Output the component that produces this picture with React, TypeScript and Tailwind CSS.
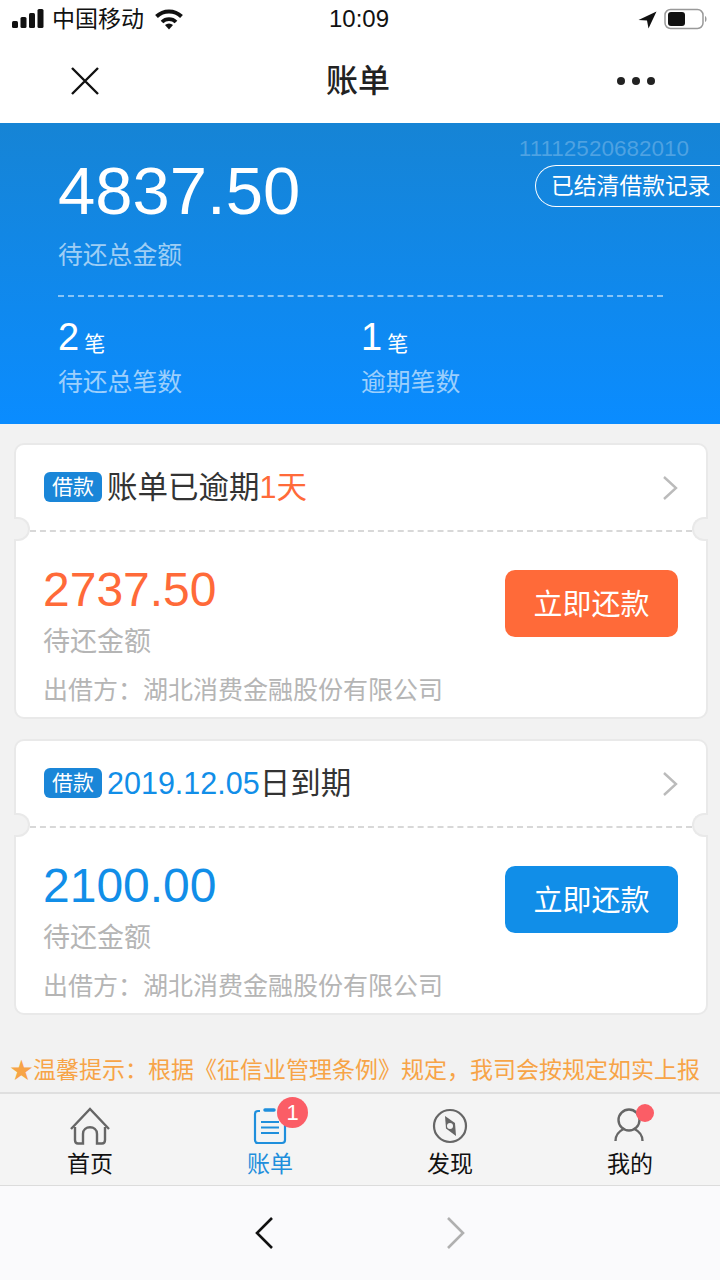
const font = "font-['Liberation_Sans','Noto_Sans_CJK_SC',sans-serif]";

function StatusBar() {
  return (
    <div className="flex h-[38px] items-center justify-between pl-3 pr-[13px]">
      <div className="flex items-center">
        <svg width="34" height="20" viewBox="0 0 34 20" className="mr-[6px]">
          <rect x="0" y="12" width="6" height="7" rx="1.5" fill="#111" />
          <rect x="8.500" y="8" width="6" height="11" rx="1.5" fill="#111" />
          <rect x="17" y="4" width="6" height="15" rx="1.5" fill="#111" />
          <rect x="25.500" y="0" width="6" height="19" rx="1.5" fill="#111" />
        </svg>
        <span className="text-[23px] leading-none text-[#111]">中国移动</span>
        <svg width="30" height="22" viewBox="0 0 30 22" className="ml-[10px]">
          <path d="M2.500 8.500a18 18 0 0 1 25 0" fill="none" stroke="#111" strokeWidth="4" />
          <path d="M8 14a10 10 0 0 1 14 0" fill="none" stroke="#111" strokeWidth="3.800" />
          <path d="M11 17a6 6 0 0 1 8 0l-4 4.500z" fill="#111" />
        </svg>
      </div>
      <span className="absolute left-[329px] text-[24px] leading-none text-[#111]">10:09</span>
      <div className="flex items-center gap-[7px]">
        <svg width="19" height="19" viewBox="0 0 19 19">
          <path d="M18.500 1.500 0.500 10l8.500 0.500 1.500 8z" fill="#111" />
        </svg>
        <svg width="43" height="22" viewBox="0 0 43 22">
          <rect x="1" y="1.500" width="38" height="19" rx="5.500" fill="none" stroke="#999" strokeWidth="1.500" />
          <rect x="4" y="4" width="17" height="14" rx="3" fill="#111" />
          <path d="M41 8v6c1-.5 1.500-1.500 1.500-3S42 8.500 41 8z" fill="#999" />
        </svg>
      </div>
    </div>
  );
}

function NavBar() {
  return (
    <div className="flex h-[85px] items-center justify-between pl-[71px] pr-[65px]">
      <svg width="28" height="28" viewBox="0 0 28 28">
        <path d="M1 1 27 27M27 1 1 27" stroke="#111" strokeWidth="2.400" fill="none" />
      </svg>
      <span className="text-[32px] font-medium leading-none text-[#222]">账单</span>
      <div className="flex items-center gap-[7px]">
        <span className="h-[8px] w-[8px] rounded-full bg-[#222]" />
        <span className="h-[8px] w-[8px] rounded-full bg-[#222]" />
        <span className="h-[8px] w-[8px] rounded-full bg-[#222]" />
      </div>
    </div>
  );
}

function Summary() {
  return (
    <div className="relative h-[301px] bg-gradient-to-b from-[#1684d5] to-[#0a8cff] pl-[58px] pr-[57px] pt-[30px] text-white">
      <div className="absolute right-[31px] top-[15px] text-[22.500px] leading-none text-[#ffffff40]">11112520682010</div>
      <div className="absolute right-0 top-[42px] flex h-[42px] w-[185px] items-center rounded-l-[21px] border border-r-0 border-white pl-[15px] text-[22.800px] leading-none">
        已结清借款记录
      </div>
      <div className="text-[67px] leading-[76px]">4837.50</div>
      <div className="mt-[12px] text-[24.800px] leading-[30px] text-[#ffffff99]">待还总金额</div>
      <div className="mt-[24px] border-t-2 border-dashed border-[#ffffff80]" />
      <div className="mt-[18px] flex">
        <div className="w-[303px]">
          <div className="flex items-end leading-none">
            <span className="text-[38px] leading-[44px]">2</span>
            <span className="ml-[5px] pb-[5px] text-[21px] leading-none">笔</span>
          </div>
          <div className="mt-[9px] text-[24.800px] leading-[30px] text-[#ffffff99]">待还总笔数</div>
        </div>
        <div>
          <div className="flex items-end leading-none">
            <span className="text-[38px] leading-[44px]">1</span>
            <span className="ml-[5px] pb-[5px] text-[21px] leading-none">笔</span>
          </div>
          <div className="mt-[9px] text-[24.800px] leading-[30px] text-[#ffffff99]">逾期笔数</div>
        </div>
      </div>
    </div>
  );
}

function Card({ title, amount, color }: { title: React.ReactNode; amount: string; color: string }) {
  const amountColor = color === 'orange' ? 'text-[#ff6a39]' : 'text-[#118ee8]';
  const buttonColor = color === 'orange' ? 'bg-[#ff6a39]' : 'bg-[#118ee8]';
  return (
    <div className="relative h-[276px] rounded-[10px] border-2 border-[#e9e9e9] bg-white">
      <div className="flex h-[85px] items-center justify-between pl-[28px] pr-[28px]">
        <div className="flex items-center">
          <span className="mb-[2px] flex h-[30px] w-[58px] items-center justify-center rounded-[6px] bg-[#1a86d8] text-[21px] leading-none text-white">
            借款
          </span>
          <span className="ml-[5px] text-[30.500px] leading-none text-[#333]">{title}</span>
        </div>
        <svg width="16" height="26" viewBox="0 0 16 26">
          <path d="M2 2 14 13 2 24" fill="none" stroke="#bbb" strokeWidth="2.400" />
        </svg>
      </div>
      <div className="mx-[14px] border-t-2 border-dashed border-[#d8d8d8]" />
      <div className="absolute left-[-2px] top-[72px] h-[24px] w-[16px] rounded-r-[12px] border-2 border-l-0 border-[#e9e9e9] bg-[#f2f2f2]" />
      <div className="absolute right-[-2px] top-[72px] h-[24px] w-[16px] rounded-l-[12px] border-2 border-r-0 border-[#e9e9e9] bg-[#f2f2f2]" />
      <div className="flex justify-between pl-[27px] pr-[28px]">
        <div>
          <div className={`mt-[31px] text-[48px] leading-[54px] ${amountColor}`}>{amount}</div>
          <div className="mt-[9px] text-[27px] leading-[32px] text-[#b5b5b5]">待还金额</div>
          <div className="mt-[17px] text-[25px] leading-[30px] text-[#b5b5b5]">出借方：湖北消费金融股份有限公司</div>
        </div>
        <div className={`mt-[38px] flex h-[67px] w-[173px] items-center justify-center rounded-[10px] pt-[3px] text-[29px] leading-none text-white ${buttonColor}`}>
          立即还款
        </div>
      </div>
    </div>
  );
}

function TabItem({ label, active, children }: { label: string; active?: boolean; children: React.ReactNode }) {
  return (
    <div className="relative flex flex-1 flex-col items-center pt-[13px]">
      <div className="h-[40px]">{children}</div>
      <span className={`mt-[3px] text-[23px] leading-[28px] ${active ? 'text-[#1f8fdc]' : 'text-[#111]'}`}>{label}</span>
    </div>
  );
}

function TabBar() {
  return (
    <div className="flex h-[94px] border-t-2 border-b border-t-[#dfdfdf] border-b-[#dcdcdc] bg-[#f4f4f4]">
      <TabItem label="首页">
        <svg width="42" height="40" viewBox="0 0 42 40" fill="none" stroke="#666" strokeWidth="2.400">
          <path d="M2 22 21 2l19 20" />
          <path d="M6 20v13c0 2 1 3.500 3 3.500h5V27c0-9 14-9 14 0v9.500h5c2 0 3-1.500 3-3.500V20" />
        </svg>
      </TabItem>
      <TabItem label="账单" active>
        <div className="relative">
          <svg width="34" height="40" viewBox="0 0 34 40" fill="none" stroke="#1f8fdc" strokeWidth="2.200">
            <path d="M7 4H5C3 4 2 5 2 7v26c0 2 1 3 3 3h24c2 0 3-1 3-3V7c0-2-1-3-3-3h-1" />
            <path d="M12 3h9" strokeWidth="3.500" strokeLinecap="round" />
            <path d="M8 15h18M8 20.500h18M8 26h18" />
          </svg>
          <span className="absolute left-[24px] top-[-10px] flex h-[31px] w-[31px] items-center justify-center rounded-full bg-[#fb5d66] text-[22px] leading-none text-white">
            1
          </span>
        </div>
      </TabItem>
      <TabItem label="发现">
        <svg width="36" height="36" viewBox="0 0 36 36" fill="none" className="mt-[1px]">
          <circle cx="18" cy="18" r="16" stroke="#666" strokeWidth="2.200" />
          <path d="M13 8 23 15l1 13-10-7.500z" fill="#666" />
          <circle cx="18" cy="18" r="3" fill="#f4f4f4" />
        </svg>
      </TabItem>
      <TabItem label="我的">
        <div className="relative">
          <svg width="34" height="40" viewBox="0 0 34 40" fill="none" stroke="#666" strokeWidth="2.400">
            <circle cx="16" cy="13" r="10.500" />
            <path d="M2.500 34c0-6 4-10 8-12M29.500 34c0-6-4-10-8-12" />
          </svg>
          <span className="absolute left-[23px] top-[-3px] h-[18px] w-[18px] rounded-full bg-[#fb5d66]" />
        </div>
      </TabItem>
    </div>
  );
}

function BrowserBar() {
  return (
    <div className="flex flex-1 items-center justify-center gap-[172px] bg-[#fafafc]">
      <svg width="20" height="34" viewBox="0 0 20 34" fill="none" stroke="#111" strokeWidth="2.600">
        <path d="M18 2 3 17l15 15" />
      </svg>
      <svg width="20" height="34" viewBox="0 0 20 34" fill="none" stroke="#b0b0b0" strokeWidth="2.600">
        <path d="M2 2l15 15L2 32" />
      </svg>
    </div>
  );
}

export default function App() {
  return (
    <div className={`flex h-[1280px] w-[720px] flex-col overflow-hidden bg-[#f2f2f2] ${font}`}>
      <div className="relative bg-white">
        <StatusBar />
        <NavBar />
      </div>
      <Summary />
      <div className="flex flex-col gap-[20px] pl-[14px] pr-[12px] pt-[19px]">
        <Card
          color="orange"
          amount="2737.50"
          title={
            <>
              账单已逾期<span className="text-[#ff6a39]">1天</span>
            </>
          }
        />
        <Card
          color="blue"
          amount="2100.00"
          title={
            <>
              <span className="text-[#118ee8]">2019.12.05</span>日到期
            </>
          }
        />
      </div>
      <div className="mt-[38px] h-[39px] whitespace-nowrap pl-[10px] text-[23px] leading-[34px] text-[#f7a447]">
        ★温馨提示：根据《征信业管理条例》规定，我司会按规定如实上报
      </div>
      <TabBar />
      <BrowserBar />
    </div>
  );
}
